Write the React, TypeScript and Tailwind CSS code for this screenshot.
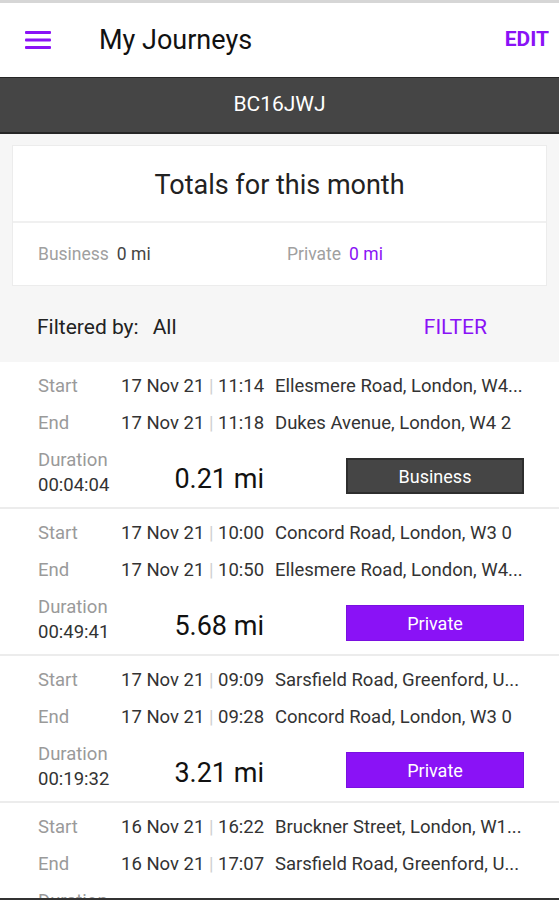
import React from 'react';

interface Journey {
  startDate: string;
  startTime: string;
  startPlace: string;
  endDate: string;
  endTime: string;
  endPlace: string;
  duration: string;
  distance: string;
  type: 'Business' | 'Private';
}

// addresses are shown already shortened, as the app does
const journeys: Journey[] = [
  {
    startDate: '17 Nov 21',
    startTime: '11:14',
    startPlace: 'Ellesmere Road, London, W4...',
    endDate: '17 Nov 21',
    endTime: '11:18',
    endPlace: 'Dukes Avenue, London, W4 2',
    duration: '00:04:04',
    distance: '0.21 mi',
    type: 'Business',
  },
  {
    startDate: '17 Nov 21',
    startTime: '10:00',
    startPlace: 'Concord Road, London, W3 0',
    endDate: '17 Nov 21',
    endTime: '10:50',
    endPlace: 'Ellesmere Road, London, W4...',
    duration: '00:49:41',
    distance: '5.68 mi',
    type: 'Private',
  },
  {
    startDate: '17 Nov 21',
    startTime: '09:09',
    startPlace: 'Sarsfield Road, Greenford, U...',
    endDate: '17 Nov 21',
    endTime: '09:28',
    endPlace: 'Concord Road, London, W3 0',
    duration: '00:19:32',
    distance: '3.21 mi',
    type: 'Private',
  },
  {
    startDate: '16 Nov 21',
    startTime: '16:22',
    startPlace: 'Bruckner Street, London, W1...',
    endDate: '16 Nov 21',
    endTime: '17:07',
    endPlace: 'Sarsfield Road, Greenford, U...',
    duration: '00:45:10',
    distance: '9.84 mi',
    type: 'Business',
  },
];

const Row: React.FC<{ label: string; date: string; time: string; place: string }> = ({ label, date, time, place }) => (
  <div className="flex items-center h-[37px] text-[18.5px]">
    <span className="w-[83px] shrink-0 text-[#9a9a9a]">{label}</span>
    <span className="w-[154px] shrink-0 text-[#333] whitespace-nowrap">
      {date} <span className="text-[#d0d0d0]">|</span> {time}
    </span>
    <span className="text-[18.5px] text-[#333] whitespace-nowrap">{place}</span>
  </div>
);

const JourneyItem: React.FC<{ j: Journey }> = ({ j }) => (
  <div className="h-[147px] border-b-2 border-[#ececec] pl-[38px] pt-[6px] bg-white">
    <Row label="Start" date={j.startDate} time={j.startTime} place={j.startPlace} />
    <Row label="End" date={j.endDate} time={j.endTime} place={j.endPlace} />
    <div className="flex items-start mt-[6px]">
      <div className="w-[120px] shrink-0 text-[18.5px] leading-[25px]">
        <div className="text-[#9a9a9a]">Duration</div>
        <div className="text-[#333]">{j.duration}</div>
      </div>
      <div className="w-[106px] shrink-0 text-right text-[27px] text-[#111] leading-[30px] mt-[16px] whitespace-nowrap">
        {j.distance}
      </div>
      <button
        className={`ml-[82px] mt-[10px] w-[178px] h-[36px] text-[18px] text-white ${
          j.type === 'Business'
            ? 'bg-[#454545] border-2 border-[#2e2e2e]'
            : 'bg-[#8a12f6] border border-[#7a10e0]'
        }`}
      >
        {j.type}
      </button>
    </div>
  </div>
);

export default function App() {
  return (
    <div
      className="w-[559px] h-[900px] overflow-hidden bg-[#f6f6f6] flex flex-col relative"
      style={{ fontFamily: 'Roboto, "Liberation Sans", sans-serif' }}
    >
      <div className="h-[3px] bg-[#d6d6d6] shrink-0" />
      <header className="h-[74px] bg-white flex items-center shrink-0">
        <div className="pl-[25px] w-[99px] shrink-0">
          <svg width="26" height="20" viewBox="0 0 26 20">
            <rect x="0" y="1" width="26" height="3" rx="1" fill="#8a12f6" />
            <rect x="0" y="8.5" width="26" height="3" rx="1" fill="#8a12f6" />
            <rect x="0" y="16" width="26" height="3" rx="1" fill="#8a12f6" />
          </svg>
        </div>
        <h1 className="text-[27px] text-[#111] flex-1">My Journeys</h1>
        <button className="pr-[10px] text-[21px] font-bold text-[#8a12f6]">EDIT</button>
      </header>
      <div className="h-[57px] bg-[#454545] border-t border-b-2 border-[#262626] flex items-center justify-center text-white text-[21px] shrink-0">
        BC16JWJ
      </div>
      <div className="pt-[11px] px-[12px] shrink-0">
        <div className="bg-white border border-[#ececec]">
          <div className="h-[77px] pt-[4px] flex items-center justify-center text-[27px] text-[#222] border-b-2 border-[#f0f0f0]">
            Totals for this month
          </div>
          <div className="h-[62px] flex items-center text-[17.5px]">
            <div className="w-[274px] pl-[25px]">
              <span className="text-[#a0a0a0]">Business</span>
              <span className="ml-[8px] text-[#444]">0 mi</span>
            </div>
            <div>
              <span className="text-[#a0a0a0]">Private</span>
              <span className="ml-[8px] text-[#8a12f6]">0 mi</span>
            </div>
          </div>
        </div>
      </div>
      <div className="h-[76px] flex items-center pl-[37px] text-[21px] pt-[8px] shrink-0">
        <span className="text-[#222]">Filtered by:</span>
        <span className="ml-[14px] text-[#222]">All</span>
        <button className="ml-auto mr-[72px] text-[#8a12f6]">FILTER</button>
      </div>
      <div className="flex-1 bg-white">
        {journeys.map((j, i) => (
          <JourneyItem key={i} j={j} />
        ))}
      </div>
      <div className="absolute left-0 right-0 bottom-0 h-[2px] bg-[#333]" />
    </div>
  );
}
